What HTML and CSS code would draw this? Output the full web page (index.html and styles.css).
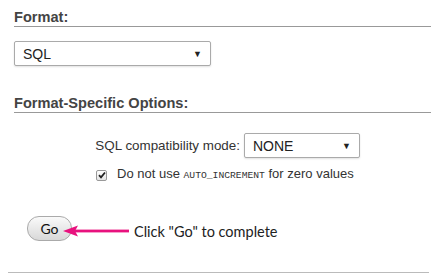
FILE: index.html
```html
<!DOCTYPE html>
<html>
<head>
<link rel="stylesheet" href="styles.css">
</head>
<body>

<div class="page">

  <h3 class="heading">Format:</h3>
  <div class="select select-format">
    <span>SQL</span>
    <span class="caret">&#9660;</span>
  </div>

  <h3 class="heading heading-options">Format-Specific Options:</h3>

  <div class="option-row">
    <label class="option-label">SQL compatibility mode:</label>
    <div class="select select-compat">
      <span>NONE</span>
      <span class="caret">&#9660;</span>
    </div>
  </div>

  <div class="check-row">
    <span class="checkbox">
      <svg width="8" height="8" viewBox="0 0 8 8"><path d="M1 4.2 L3 6.3 L7 1.5" fill="none" stroke="#222" stroke-width="1.8"/></svg>
    </span>
    <span>Do not use <code>AUTO_INCREMENT</code> for zero values</span>
  </div>

  <div class="go-row">
    <button class="go-btn" type="button">Go</button>
    <svg class="arrow" width="66" height="14" viewBox="0 0 66 14">
      <path d="M0 7 L15 1.5 L12 7 L15 12.5 Z" fill="#e8127e"/>
      <rect x="11" y="5.6" width="55" height="2.8" fill="#e8127e"/>
    </svg>
    <span class="hint">Click "Go" to complete</span>
  </div>

</div>

<div class="bottom-line"></div>

</body>
</html>
```

FILE: styles.css
```css
body {
  margin: 0;
  background: #fff;
  font-family: "Liberation Sans", Arial, sans-serif;
  color: #333;
}

.page {
  padding: 8px 0 0 14px;
}

.heading {
  margin: 0;
  font-size: 14.6px;
  line-height: 18px;
  font-weight: bold;
  color: #444;
  border-bottom: 1px solid #999;
}

.heading-options {
  margin-top: 28px;
}

.select {
  display: flex;
  align-items: center;
  justify-content: space-between;
  box-sizing: border-box;
  height: 25px;
  padding: 0 8px 0 8px;
  border: 1px solid #aaa;
  border-radius: 2px;
  box-shadow: 0 1px 2px rgba(0, 0, 0, 0.12);
  font-size: 14px;
  color: #222;
  background: #fff;
}

.select-format {
  width: 197px;
  margin-top: 14px;
}

.select-compat {
  width: 116px;
}

.caret {
  font-size: 9px;
  color: #222;
}

.option-row {
  display: flex;
  align-items: center;
  margin-top: 20px;
}

.option-label {
  width: 226px;
  margin-right: 4px;
  text-align: right;
  font-size: 13.4px;
}

.check-row {
  display: flex;
  align-items: center;
  margin: 8px 0 0 82px;
  font-size: 13px;
  line-height: 16px;
}

.checkbox {
  display: flex;
  align-items: center;
  justify-content: center;
  box-sizing: border-box;
  width: 11px;
  height: 11px;
  margin-right: 10px;
  border: 1px solid #999;
  border-radius: 2px;
  background: linear-gradient(#fff, #e4e4e4);
}

code {
  font-family: "Liberation Mono", monospace;
  font-size: 9.7px;
}

.go-row {
  display: flex;
  align-items: center;
  margin: 32px 0 0 13px;
}

.go-btn {
  width: 45px;
  height: 25px;
  padding: 0;
  border: 1px solid #aaa;
  border-radius: 12px;
  background: linear-gradient(#fafafa, #d8d8d8);
  font-family: "Lato", sans-serif;
  font-size: 14px;
  color: #111;
}

.arrow {
  margin-left: -9px;
  margin-top: 4px;
}

.hint {
  margin-left: 5px;
  margin-top: 5px;
  font-family: "Lato", sans-serif;
  font-size: 14.5px;
  color: #222;
}

.bottom-line {
  height: 1px;
  margin: 31px 2px 0 8px;
  background: #bbb;
}
```
